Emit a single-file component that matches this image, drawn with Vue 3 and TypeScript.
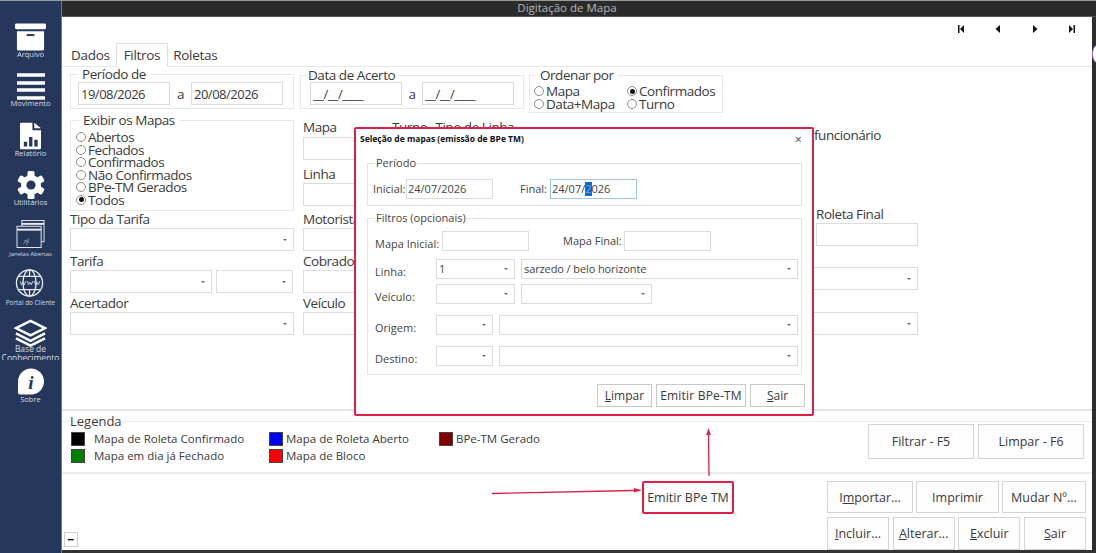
<template>
  <div class="screen">
    <aside class="sidebar">
      <div class="side-item">
        <svg class="ico" viewBox="0 0 32 28" width="31" height="27"><rect x="0" y="0" width="32" height="6" rx="1.5" fill="#fff"/><path d="M2 8h28v18a2 2 0 0 1-2 2H4a2 2 0 0 1-2-2z" fill="#fff"/><rect x="12" y="11" width="8" height="2" fill="#25375a"/></svg>
        <span>Arquivo</span>
      </div>
      <div class="side-item">
        <svg class="ico" viewBox="0 0 28 28" width="28" height="28"><path d="M0 3h28M0 11h28M0 18h28M0 26h28" stroke="#fff" stroke-width="3.4"/></svg>
        <span>Movimento</span>
      </div>
      <div class="side-item">
        <svg class="ico" viewBox="0 0 22 28" width="21" height="27"><path d="M0 1.500A1.500 1.500 0 0 1 1.500 0H13v8h9v18.500a1.500 1.500 0 0 1-1.500 1.500h-19A1.500 1.500 0 0 1 0 26.500z" fill="#fff"/><path d="M15 0l7 6h-7z" fill="#fff"/><path d="M4 20h3.500v5H4zM9.500 15H13v10H9.500zM15 18h3.500v7H15z" fill="#25375a"/></svg>
        <span>Relatório</span>
      </div>
      <div class="side-item">
        <svg class="ico" viewBox="0 0 28 28" width="28" height="28">
          <rect v-for="a in gearTeeth" :key="a" x="10.500" y="0" width="7" height="8" rx="1.500" fill="#fff" :transform="`rotate(${a} 14 14)`"/>
          <circle cx="14" cy="14" r="10" fill="#fff"/>
          <circle cx="14" cy="14" r="4.600" fill="#25375a"/>
        </svg>
        <span>Utilitários</span>
      </div>
      <div class="side-item">
        <svg class="ico" viewBox="0 0 30 29" width="30" height="29" fill="none" stroke="#e8ebf0" stroke-width="1"><rect x="5.500" y=".5" width="23" height="22"/><path d="M5.500 4h23" stroke-width="2"/><rect x=".5" y="6.500" width="25" height="22" fill="#25375a"/><path d="M.5 10h25" stroke-width="2"/><path d="M7 25l4-5M10 26l3-7M8 21l5 2" stroke="#9aa6ba" stroke-width=".8"/></svg>
        <span class="tiny">Janelas Abertas</span>
      </div>
      <div class="side-item">
        <svg class="ico globe" viewBox="0 0 30 30" width="29" height="29" fill="none" stroke="#e8ebf0" stroke-width="1.400"><circle cx="15" cy="15" r="14"/><ellipse cx="15" cy="15" rx="7" ry="14"/><path d="M15 1v7M15 22v7M3 8h24M3 22h24"/><path d="M5 13l1.500 4 1.500-3 1.500 3L11 13M12.500 13l1.500 4 1.500-3 1.500 3 1.500-4M20 13l1.500 4 1.500-3 1.500 3 1.500-4" stroke-width=".9"/></svg>
        <span class="tiny portal">Portal do Cliente</span>
      </div>
      <div class="side-item">
        <svg class="ico" viewBox="0 0 34 28" width="33" height="27" fill="none" stroke="#fff" stroke-width="2.600"><path d="M17 1.500L32 9 17 16.500 2 9z"/><path d="M2 14.500l15 7.500 15-7.500M2 19.500L17 27l15-7.500"/></svg>
        <span class="clipped">Base de Conhecimento</span>
      </div>
      <div class="side-item">
        <svg class="ico" viewBox="0 0 27 28" width="26" height="27"><path d="M13.500 0a13.500 13.500 0 0 1 0 27H2a2 2 0 0 1-2-2V13.500A13.500 13.500 0 0 1 13.500 0z" fill="#fff"/><text x="13.500" y="21" text-anchor="middle" class="info">i</text></svg>
        <span>Sobre</span>
      </div>
    </aside>

    <main class="window">
      <header class="titlebar">Digitação de Mapa</header>

      <div class="content">
        <div class="navrow">
          <svg v-for="nav in navIcons" :key="nav" viewBox="0 0 8 8" width="8" height="8"><path :d="nav" fill="#111"/></svg>
        </div>

        <nav class="tabs">
          <span class="tab">Dados</span>
          <span class="tab active">Filtros</span>
          <span class="tab">Roletas</span>
        </nav>

        <section class="form">
          <div class="top-row">
            <fieldset class="group periodo">
              <legend>Período de</legend>
              <div class="date-row">
                <span class="input date">19/08/2026</span>
                <span class="sep">a</span>
                <span class="input date">20/08/2026</span>
              </div>
            </fieldset>
            <fieldset class="group acerto">
              <legend>Data de Acerto</legend>
              <div class="date-row">
                <span class="input date">__/__/____</span>
                <span class="sep">a</span>
                <span class="input date">__/__/____</span>
              </div>
            </fieldset>
            <fieldset class="group ordenar">
              <legend>Ordenar por</legend>
              <div class="radio-grid">
                <label v-for="o in ordenar" :key="o.text" class="radio"><i :class="{ on: o.on }"></i>{{ o.text }}</label>
              </div>
            </fieldset>
          </div>

          <div class="fields">
            <div class="col col-left">
              <fieldset class="group exibir">
                <legend>Exibir os Mapas</legend>
                <label v-for="o in exibir" :key="o.text" class="radio"><i :class="{ on: o.on }"></i>{{ o.text }}</label>
              </fieldset>
              <label class="lbl lbl-tipo">Tipo da Tarifa</label>
              <span class="input select"></span>
              <label class="lbl">Tarifa</label>
              <div class="pair">
                <span class="input select"></span>
                <span class="input select"></span>
              </div>
              <label class="lbl">Acertador</label>
              <span class="input select"></span>
            </div>

            <div class="col col-mid">
              <label class="lbl lbl-mapa">Mapa</label>
              <span class="input"></span>
              <label class="lbl lbl-linha">Linha</label>
              <span class="input"></span>
              <label class="lbl lbl-motorista">Motorista</label>
              <span class="input"></span>
              <label class="lbl">Cobrador</label>
              <span class="input"></span>
              <label class="lbl">Veículo</label>
              <span class="input"></span>
            </div>

            <div class="col col-turno">
              <div class="turno-labels"><span>Turno</span><span>Tipo de Linha</span></div>
            </div>

            <div class="col col-right">
              <label class="lbl lbl-func">funcionário</label>
              <label class="lbl lbl-roleta">Roleta Final</label>
              <span class="input roleta"></span>
              <span class="input select wide first"></span>
              <span class="input select wide second"></span>
            </div>
          </div>
        </section>

        <section class="legend-bar">
          <div class="legend-box">
            <span class="legend-title">Legenda</span>
            <div class="legend-grid">
              <span v-for="item in legendItems" :key="item.text" class="legend-item">
                <i :style="{ background: item.color }"></i>{{ item.text }}
              </span>
            </div>
          </div>
          <div class="legend-actions">
            <button class="btn big">Filtrar - F5</button>
            <button class="btn big">Limpar - F6</button>
          </div>
        </section>

        <footer class="bottom">
          <button class="minus">−</button>
          <button class="btn emitir">Emitir BPe TM</button>
          <div class="actions">
            <div class="act-row">
              <button class="btn imp">I<u>m</u>portar...</button>
              <button class="btn impr">Imprimir</button>
              <button class="btn mudar">Mudar Nº...</button>
            </div>
            <div class="act-row second-row">
              <button class="btn crud"><u>I</u>ncluir...</button>
              <button class="btn crud"><u>A</u>lterar...</button>
              <button class="btn crud"><u>E</u>xcluir</button>
              <button class="btn crud"><u>S</u>air</button>
            </div>
          </div>
        </footer>
      </div>
      <div class="edge-dot"></div>
    </main>

    <div class="dialog">
      <div class="dlg-title">
        <span>Seleção de mapas (emissão de BPe TM)</span>
        <span class="dlg-close">×</span>
      </div>
      <fieldset class="dlg-group dlg-periodo">
        <legend>Período</legend>
        <div class="dlg-dates">
          <span class="dl">Inicial:</span>
          <span class="input d-in">24/07/2026</span>
          <span class="dl final">Final:</span>
          <span class="input d-in focus">24/07/<b class="sel">2</b>026</span>
        </div>
      </fieldset>
      <fieldset class="dlg-group dlg-filtros">
        <legend>Filtros (opcionais)</legend>
        <div class="dlg-row r-mapa">
          <span class="dl w-mi">Mapa Inicial:</span>
          <span class="input d-in"></span>
          <span class="dl w-mf">Mapa Final:</span>
          <span class="input d-in"></span>
        </div>
        <div class="dlg-row r-linha">
          <span class="dl w-l">Linha:</span>
          <span class="input select s-a">1</span>
          <span class="input select s-fill">sarzedo / belo horizonte</span>
        </div>
        <div class="dlg-row r-veic">
          <span class="dl w-l">Veículo:</span>
          <span class="input select s-a"></span>
          <span class="input select s-b"></span>
        </div>
        <div class="dlg-row r-orig">
          <span class="dl w-l">Origem:</span>
          <span class="input select s-c"></span>
          <span class="input select s-fill"></span>
        </div>
        <div class="dlg-row r-orig">
          <span class="dl w-l">Destino:</span>
          <span class="input select s-c"></span>
          <span class="input select s-fill"></span>
        </div>
      </fieldset>
      <div class="dlg-actions">
        <button class="btn d-btn"><u>L</u>impar</button>
        <button class="btn d-btn emit">Emitir BPe-TM</button>
        <button class="btn d-btn"><u>S</u>air</button>
      </div>
    </div>

    <svg class="arrows" width="1096" height="553" viewBox="0 0 1096 553">
      <path d="M492 493.500L634 490.500" stroke="#dc2048" stroke-width="1.300" fill="none"/>
      <path d="M642 490.300l-8-2.300v4.600z" fill="#dc2048"/>
      <path d="M709 476L708.500 434" stroke="#dc2048" stroke-width="1.300" fill="none"/>
      <path d="M708.500 428l-2.300 7h4.600z" fill="#dc2048"/>
    </svg>
  </div>
</template>

<script setup lang="ts">
interface RadioOption {
  text: string
  on?: boolean
}

const gearTeeth: number[] = [0, 60, 120, 180, 240, 300]

const navIcons: string[] = [
  'M1 0h1.500v8H1zM7 0v8L3 4z',
  'M6 0v8L1.500 4z',
  'M2 0v8l4.500-4z',
  'M1 0v8l4-4zM5.500 0H7v8H5.500z',
]

const ordenar: RadioOption[] = [
  { text: 'Mapa' },
  { text: 'Confirmados', on: true },
  { text: 'Data+Mapa' },
  { text: 'Turno' },
]

const exibir: RadioOption[] = [
  { text: 'Abertos' },
  { text: 'Fechados' },
  { text: 'Confirmados' },
  { text: 'Não Confirmados' },
  { text: 'BPe-TM Gerados' },
  { text: 'Todos', on: true },
]

const legendItems = [
  { text: 'Mapa de Roleta Confirmado', color: '#000000' },
  { text: 'Mapa de Roleta Aberto', color: '#0000ff' },
  { text: 'BPe-TM Gerado', color: '#800000' },
  { text: 'Mapa em dia já Fechado', color: '#008000' },
  { text: 'Mapa de Bloco', color: '#ff0000' },
]
</script>

<style>
html,
body {
  margin: 0;
  background: #fff;
}
</style>

<style scoped>
.screen {
  position: relative;
  width: 1096px;
  height: 553px;
  display: flex;
  overflow: hidden;
  background: #fff;
  font-family: "Open Sans", "Noto Sans", sans-serif;
  color: #3a3a3a;
  box-sizing: border-box;
  border-top: 1px solid #9a9a9a;
}

/* barra lateral */
.sidebar {
  width: 61px;
  flex: none;
  background: #25375a;
  border-right: 1px solid #6d7a91;
  padding-top: 22px;
  display: flex;
  flex-direction: column;
}
.side-item {
  height: 49.300px;
  display: flex;
  flex-direction: column;
  align-items: center;
  color: #d7dce5;
  font-size: 7.500px;
  line-height: 9px;
  text-align: center;
}
.side-item .ico {
  flex: none;
  height: 28px;
  margin-bottom: -1px;
}
.side-item .globe {
  margin-right: 3px;
}
.side-item .tiny {
  font-size: 6px;
  white-space: nowrap;
  margin-top: 3px;
}
.side-item .portal {
  font-size: 6.400px;
  margin-top: 2px;
}
.side-item .clipped {
  width: 61px;
  height: 16px;
  overflow: hidden;
  margin-top: -2px;
  font-size: 8.500px;
}
.info {
  font-family: "Liberation Serif", serif;
  font-style: italic;
  font-weight: 700;
  font-size: 20px;
  fill: #25375a;
}

/* janela */
.window {
  position: relative;
  flex: 1;
  min-width: 0;
  display: flex;
  flex-direction: column;
}
.titlebar {
  height: 15px;
  flex: none;
  background: #2b2b2b;
  color: #b8b8b8;
  font-size: 11.500px;
  line-height: 14px;
  text-align: center;
  padding-right: 24px;
  border-bottom: 1px solid #555;
}
.content {
  flex: 1;
  min-height: 0;
  border-right: 4px solid #2e2e2e;
  border-bottom: 3px solid #333;
  display: flex;
  flex-direction: column;
}
.edge-dot {
  position: absolute;
  right: -6px;
  top: 44px;
  width: 8px;
  height: 16px;
  border-radius: 50%;
  border: 1px solid #9a5fd0;
  background: #fff;
}
.navrow {
  height: 26px;
  flex: none;
  display: flex;
  justify-content: flex-end;
  align-items: flex-start;
  gap: 29px;
  padding: 8px 16px 0 0;
  box-sizing: border-box;
}
.tabs {
  height: 24px;
  flex: none;
  display: flex;
  align-items: flex-end;
  padding-left: 4px;
  border-bottom: 1px solid #e6e6e6;
  box-sizing: border-box;
  font-size: 13.500px;
  letter-spacing: -.3px;
}
.tab {
  padding: 0 5px;
  line-height: 22px;
}
.tab:first-child {
  padding-right: 6px;
}
.tab.active {
  height: 24px;
  border: 1px solid #e0e0e0;
  border-bottom: 1px solid #fff;
  margin-bottom: -1px;
  box-sizing: border-box;
  padding: 0 7px;
  background: #fff;
}

/* filtros */
.form {
  height: 344px;
  flex: none;
  padding: 0 0 0 8px;
  box-sizing: border-box;
  font-size: 13.500px;
  letter-spacing: -.45px;
  line-height: 14px;
  border-bottom: 2px solid #e4e4e4;
}
.top-row {
  display: flex;
  gap: 6px;
  height: 46px;
  align-items: flex-start;
}
.group {
  margin: 0;
  padding: 0;
  border: 1px solid #e8e8e8;
  box-sizing: border-box;
  min-width: 0;
}
.group legend {
  margin-left: 7px;
  padding: 0 4px;
  line-height: 14px;
}
.periodo {
  width: 224px;
  height: 42px;
}
.acerto {
  width: 224px;
  height: 41px;
  margin-top: 1px;
  padding-left: 9px;
}
.acerto legend {
  margin-left: -2px;
  padding: 0 2px 0 0;
}
.ordenar {
  width: 194px;
  height: 45px;
  margin: 1px 0 0 -1px;
}
.ordenar legend {
  margin-left: 6px;
}
.date-row {
  display: flex;
  align-items: center;
  margin-top: 1px;
  padding-left: 7px;
}
.acerto .date-row {
  padding-left: 0;
  margin-top: 0;
}
.sep {
  width: 21px;
  text-align: center;
}
.acerto .sep {
  width: 20px;
}
.date {
  width: 92px;
  font-size: 13px;
  letter-spacing: -.5px;
  padding-left: 1px;
}
.input {
  display: flex;
  align-items: center;
  position: relative;
  height: 23px;
  flex: none;
  box-sizing: border-box;
  border: 1px solid #dcdcdc;
  background: #fff;
  padding-left: 2px;
  white-space: nowrap;
}
.select::after {
  content: "";
  position: absolute;
  right: 6px;
  top: 50%;
  margin-top: -1px;
  border: 2px solid transparent;
  border-top: 2.500px solid #666;
  border-bottom: 0;
}
.radio-grid {
  display: grid;
  grid-template-columns: 93px 1fr;
  padding-left: 4px;
  margin-top: 3px;
}
.radio {
  display: flex;
  align-items: center;
  height: 12.500px;
  line-height: 12.500px;
}
.radio i {
  width: 10px;
  height: 10px;
  box-sizing: border-box;
  border: 1px solid #8c8c8c;
  border-radius: 50%;
  margin-right: 2px;
  flex: none;
  position: relative;
}
.radio i.on::after {
  content: "";
  position: absolute;
  inset: 1.500px;
  border-radius: 50%;
  background: #111;
}

.fields {
  display: flex;
}
.col {
  display: flex;
  flex-direction: column;
}
.col-left {
  width: 224px;
}
.exibir {
  height: 98px;
  padding-left: 5px;
}
.exibir legend {
  margin-left: 3px;
  margin-bottom: 4px;
}
.lbl {
  display: block;
  height: 19px;
  line-height: 21px;
  white-space: nowrap;
}
.lbl-tipo {
  height: 17px;
  line-height: 17px;
}
.pair {
  display: flex;
  gap: 4px;
}
.pair .input:first-child {
  width: 142px;
}
.pair .input:last-child {
  width: 77px;
}
.col-mid {
  width: 88px;
  margin-left: 9px;
}
.lbl-mapa {
  margin-top: 4px;
  height: 20px;
  line-height: 20px;
}
.lbl-linha {
  margin-top: 5px;
  height: 18px;
  line-height: 18px;
}
.lbl-motorista {
  margin-top: 4px;
  height: 18px;
  line-height: 18px;
}
.col-turno {
  width: 320px;
}
.turno-labels {
  display: flex;
  gap: 8px;
  margin: 4px 0 0 1px;
  line-height: 20px;
}
.col-right {
  width: 102px;
  margin-left: 105px;
  align-items: flex-start;
}
.lbl-func {
  margin: 13px 0 0 -2px;
  line-height: 19px;
}
.lbl-roleta {
  margin-top: 60px;
  height: 18px;
  line-height: 18px;
}
.roleta {
  width: 102px;
}
.wide {
  width: 130px;
  margin-left: -28px;
}
.first {
  margin-top: 21px;
}
.second {
  margin-top: 22px;
}

/* legenda */
.legend-bar {
  height: 63px;
  flex: none;
  position: relative;
  border-bottom: 2px solid #ececec;
  box-sizing: border-box;
  display: flex;
  justify-content: space-between;
}
.legend-box {
  width: 100%;
}
.legend-title {
  display: block;
  margin: 3px 0 0 8px;
  width: 52px;
  font-size: 13px;
  line-height: 15px;
  background: #fff;
  position: relative;
}
.legend-box::before {
  content: "";
  position: absolute;
  left: 0;
  right: 0;
  top: 10px;
  height: 1px;
  background: #ececec;
}
.legend-grid {
  display: grid;
  grid-template-columns: 198px 170px auto;
  grid-auto-rows: 17px;
  width: fit-content;
  padding: 0 0 0 9px;
  font-size: 11.500px;
  line-height: 14px;
  margin-top: 1px;
  position: relative;
}
.legend-item {
  display: flex;
  align-items: center;
  white-space: nowrap;
}
.legend-item i {
  width: 14px;
  height: 14px;
  box-sizing: border-box;
  border: 1px solid #444;
  margin-right: 9px;
  flex: none;
}
.legend-item:nth-child(n + 2):not(:nth-child(4)) i {
  margin-right: 3px;
}
.legend-actions {
  position: absolute;
  right: 8px;
  top: 13px;
  display: flex;
  gap: 4px;
  z-index: 1;
}
.btn {
  font: inherit;
  font-family: "Open Sans", "Noto Sans", sans-serif;
  color: #3a3a3a;
  background: #fdfdfd;
  border: 1px solid #d4d4d4;
  padding: 0;
  margin: 0;
  white-space: nowrap;
}
.big {
  width: 106px;
  height: 35px;
  font-size: 12.500px;
}

/* rodape */
.bottom {
  flex: 1;
  min-height: 0;
  display: flex;
  align-items: flex-start;
  position: relative;
  font-size: 12.500px;
}
.minus {
  width: 14px;
  height: 15px;
  margin: 58px 0 0 2px;
  padding: 0;
  border: 1px solid #d0d0d0;
  background: #fff;
  color: #000;
  font: 700 12px/10px "Open Sans", sans-serif;
}
.emitir {
  width: 92px;
  height: 33px;
  margin: 7px 0 0 564px;
  border: 2px solid #dc2048;
  border-radius: 2px;
  font-size: 12.500px;
}
.actions {
  margin: 7px 0 0 93px;
  width: 259px;
}
.act-row {
  display: flex;
  justify-content: space-between;
  height: 32px;
}
.act-row.second-row {
  margin-top: 4px;
  height: 33px;
}
.act-row .btn {
  height: 100%;
  font-size: 12.500px;
}
.imp {
  width: 86px;
}
.impr {
  width: 83px;
}
.mudar {
  width: 84px;
}
.crud {
  width: 62px;
}

/* dialogo */
.dialog {
  position: absolute;
  left: 354px;
  top: 126px;
  width: 460px;
  height: 289px;
  box-sizing: border-box;
  background: #fff;
  border: 2px solid #dc2048;
  border-radius: 2px;
  font-size: 11px;
  line-height: 14px;
  color: #444;
}
.dlg-title {
  display: flex;
  justify-content: space-between;
  align-items: center;
  height: 18px;
  padding: 0 10px 0 4px;
  font-size: 8.500px;
  font-weight: 700;
  color: #111;
  margin-top: 1px;
}
.dlg-close {
  font-size: 13px;
  font-weight: 400;
  color: #555;
}
.dlg-group {
  margin: 0 0 0 11px;
  padding: 0;
  width: 435px;
  box-sizing: border-box;
  border: 1px solid #e4e4e4;
  min-width: 0;
}
.dlg-group legend {
  margin-left: 7px;
  padding: 0 1px;
  line-height: 14px;
}
.dlg-periodo {
  height: 50px;
  margin-top: 8px;
}
.dlg-filtros {
  height: 164px;
  margin-top: 5px;
}
.dlg-dates {
  display: flex;
  align-items: center;
  margin-top: 9px;
  padding-left: 5px;
}
.dlg-dates .dl {
  width: 33px;
}
.dlg-dates .final {
  width: 30px;
  margin-left: 27px;
}
.d-in {
  width: 87px;
  height: 20px;
  padding-left: 1px;
}
.focus {
  border-color: #9cc7ea;
}
.sel {
  font-weight: 400;
  background: #0a6cd0;
  color: #6da3dd;
}
.dlg-row {
  display: flex;
  align-items: center;
  height: 20px;
  padding-left: 7px;
}
.dl {
  flex: none;
  white-space: nowrap;
}
.w-mi {
  width: 67px;
  margin-top: 6px;
}
.w-mf {
  width: 61px;
  margin-left: 34px;
}
.w-l {
  width: 61px;
  margin-top: 6px;
}
.r-mapa {
  margin-top: 6px;
}
.r-linha {
  margin-top: 8px;
}
.r-veic {
  margin-top: 5px;
}
.r-orig {
  margin-top: 11px;
}
.dlg-row .select {
  height: 20px;
  letter-spacing: -.1px;
}
.s-a {
  width: 79px;
}
.s-b {
  width: 131px;
  margin-left: 6px;
}
.s-c {
  width: 57px;
}
.s-fill {
  flex: 1;
  margin: 0 3px 0 6px;
}
.dlg-actions {
  display: flex;
  justify-content: flex-end;
  gap: 4px;
  margin-top: 9px;
  padding-right: 7px;
}
.d-btn {
  width: 55px;
  height: 23px;
  font-size: 12px;
  border-color: #c8c8c8;
}
.emit {
  width: 90px;
  letter-spacing: .2px;
}

/* setas de anotacao */
.arrows {
  position: absolute;
  left: 0;
  top: -1px;
  pointer-events: none;
}
</style>
